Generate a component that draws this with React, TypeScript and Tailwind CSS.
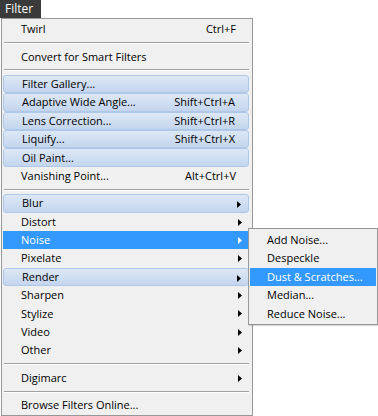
import React from 'react';

type Item =
  | { kind: 'sep' }
  | { kind: 'item'; label: string; shortcut?: string; sub?: boolean; soft?: boolean; active?: boolean };

const items: Item[] = [
  { kind: 'item', label: 'Twirl', shortcut: 'Ctrl+F' },
  { kind: 'sep' },
  { kind: 'item', label: 'Convert for Smart Filters' },
  { kind: 'sep' },
  { kind: 'item', label: 'Filter Gallery...', soft: true },
  { kind: 'item', label: 'Adaptive Wide Angle...', shortcut: 'Shift+Ctrl+A', soft: true },
  { kind: 'item', label: 'Lens Correction...', shortcut: 'Shift+Ctrl+R', soft: true },
  { kind: 'item', label: 'Liquify...', shortcut: 'Shift+Ctrl+X', soft: true },
  { kind: 'item', label: 'Oil Paint...', soft: true },
  { kind: 'item', label: 'Vanishing Point...', shortcut: 'Alt+Ctrl+V' },
  { kind: 'sep' },
  { kind: 'item', label: 'Blur', sub: true, soft: true },
  { kind: 'item', label: 'Distort', sub: true },
  { kind: 'item', label: 'Noise', sub: true, active: true },
  { kind: 'item', label: 'Pixelate', sub: true },
  { kind: 'item', label: 'Render', sub: true, soft: true },
  { kind: 'item', label: 'Sharpen', sub: true },
  { kind: 'item', label: 'Stylize', sub: true },
  { kind: 'item', label: 'Video', sub: true },
  { kind: 'item', label: 'Other', sub: true },
  { kind: 'sep' },
  { kind: 'item', label: 'Digimarc', sub: true },
  { kind: 'sep' },
  { kind: 'item', label: 'Browse Filters Online...' },
];

const noiseItems = ['Add Noise...', 'Despeckle', 'Dust & Scratches...', 'Median...', 'Reduce Noise...'];

const Arrow = ({ white }: { white?: boolean }) => (
  <svg width="4" height="7" viewBox="0 0 4 7" className="absolute right-[7px] top-[6px]">
    <path d="M0 0 L4 3.5 L0 7 Z" fill={white ? '#ffffff' : '#000000'} />
  </svg>
);

const App: React.FC = () => {
  return (
    <div className="relative w-[378px] h-[416px] bg-white overflow-hidden font-['Open_Sans',sans-serif] text-[11px] text-[#000]">
      <div className="w-[41px] h-[18px] bg-[#3a3a3a] text-white pl-[5px] leading-[18px] text-[12px]">Filter</div>

      <div className="ml-[1px] w-[252px] h-[398px] bg-[#f0f0f0] border border-[#979797] pt-[1px] px-[1px]">
        {items.map((it, i) => {
          if (it.kind === 'sep') {
            return (
              <div key={i} className="h-[9px] flex items-center pl-[1px] pr-[2px]">
                <div className="w-full h-[2px] border-t border-[#a0a0a0] border-b-white border-b" />
              </div>
            );
          }
          const bg = it.active
            ? 'bg-[#3399ff] text-white'
            : it.soft
            ? 'bg-gradient-to-b from-[#dde8f6] to-[#c3d5ee] border border-[#b0c8e8] rounded-[3px]'
            : '';
          return (
            <div
              key={i}
              className={`relative h-[18.4px] leading-[18px] flex items-center pl-[18px] pr-[13px] mr-[2px] ${bg}`}
            >
              <span className="flex-1">{it.label}</span>
              {it.shortcut && <span>{it.shortcut}</span>}
              {it.sub && <Arrow white={it.active} />}
            </div>
          );
        })}
      </div>

      <div className="absolute left-[248px] top-[228px] w-[130px] h-[97px] bg-[#f0f0f0] border border-[#979797] pt-[2px] px-[1px] shadow-[1px_1px_1px_rgba(0,0,0,0.15)]">
        {noiseItems.map((n, i) => (
          <div
            key={n}
            className={`h-[18.4px] flex items-center pl-[17px] ${i === 2 ? 'bg-[#3399ff] text-white' : ''}`}
          >
            {n}
          </div>
        ))}
      </div>
    </div>
  );
};

export default App;
